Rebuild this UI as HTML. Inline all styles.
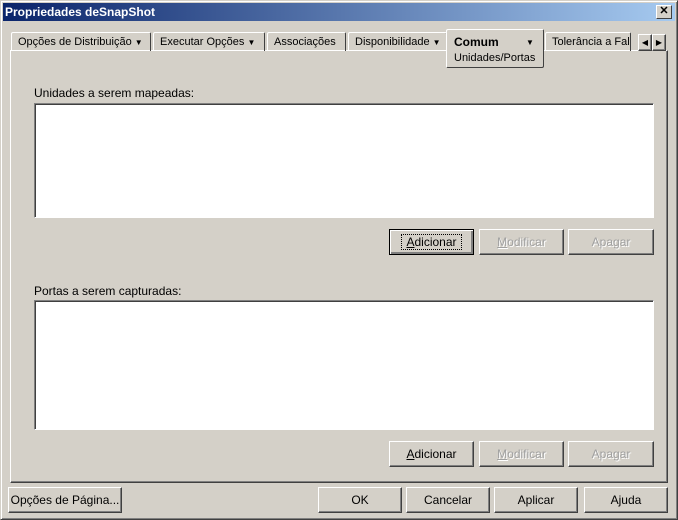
<!DOCTYPE html><html><head><style>
body{margin:0;width:678px;height:520px;background:#d4d0c8;font:11px "Liberation Sans",sans-serif;position:relative;overflow:hidden}
.a{position:absolute}
.win{left:0;top:0;width:676px;height:518px;border:1px solid;border-color:#d4d0c8 #404040 #404040 #d4d0c8;box-shadow:inset 1px 1px #fff,inset -1px -1px #808080}
.title{left:3px;top:3px;width:672px;height:18px;background:linear-gradient(90deg,#0a246a,#a6caf0);color:#fff;font-weight:bold;font-size:12px;line-height:18px;text-indent:2px}
.x{left:656px;top:5px;width:14px;height:12px;background:#d4d0c8;border:1px solid;border-color:#fff #404040 #404040 #fff;color:#000;font-size:11px;line-height:11px;text-align:center;font-weight:bold}
.btn{background:#d4d0c8;border:1px solid;border-color:#fff #404040 #404040 #fff;box-shadow:inset -1px -1px #808080;text-align:center;line-height:24px;box-sizing:border-box;height:26px;font-size:12px}
.dis{color:#a0a0a0;text-shadow:1px 1px #fff}
.tab{top:32px;height:19px;border:1px solid;border-bottom:none;border-color:#fff #404040 #fff #fff;border-radius:2px 2px 0 0;box-sizing:border-box;line-height:18px;padding-left:6px;white-space:nowrap;overflow:hidden}
.panel{left:10px;top:50px;width:658px;height:433px;border:1px solid;border-color:#fff #404040 #404040 #fff;box-sizing:border-box;box-shadow:inset -1px -1px #808080}
.list{background:#fff;border:1px solid;border-color:#808080 #fff #fff #808080;box-shadow:inset 1px 1px #404040;box-sizing:border-box}
.arr{font-size:8px}
</style></head><body>
<div class="a win"></div>
<div class="a title">Propriedades deSnapShot</div>
<div class="a x">✕</div>
<div class="a panel"></div>
<div class="a tab" style="left:11px;width:140px">Opções de Distribuição <span class="arr">▼</span></div>
<div class="a tab" style="left:153px;width:112px">Executar Opções <span class="arr">▼</span></div>
<div class="a tab" style="left:267px;width:79px">Associações</div>
<div class="a tab" style="left:348px;width:99px">Disponibilidade <span class="arr">▼</span></div>
<div class="a tab" style="left:545px;width:86px">Tolerância a Falha</div>
<div class="a" style="left:446px;top:29px;width:98px;height:39px;background:#d4d0c8;border:1px solid;border-color:#fff #404040 #404040 #fff;border-radius:2px;box-sizing:border-box"></div>
<div class="a" style="left:454px;top:35px;font-weight:bold;font-size:12px">Comum</div>
<div class="a arr" style="left:526px;top:38px">▼</div>
<div class="a" style="left:454px;top:52px">Unidades/Portas</div>
<div class="a btn" style="left:638px;top:34px;width:14px;height:17px;line-height:15px;font-size:8px">◀</div>
<div class="a btn" style="left:652px;top:34px;width:14px;height:17px;line-height:15px;font-size:8px">▶</div>
<div class="a" style="left:34px;top:86px;font-size:12px">Unidades a serem mapeadas:</div>
<div class="a list" style="left:34px;top:103px;width:620px;height:115px"></div>
<div class="a btn" style="left:389px;top:229px;width:85px;border:1px solid #000;box-shadow:inset 1px 1px #fff,inset -2px -2px #808080"><span style="outline:1px dotted #000;padding:0 4px"><u>A</u>dicionar</span></div>
<div class="a btn dis" style="left:479px;top:229px;width:85px"><u>M</u>odificar</div>
<div class="a btn dis" style="left:568px;top:229px;width:86px">Apa<u>g</u>ar</div>
<div class="a" style="left:34px;top:284px;font-size:12px">Portas a serem capturadas:</div>
<div class="a list" style="left:34px;top:300px;width:620px;height:130px"></div>
<div class="a btn" style="left:389px;top:441px;width:85px"><u>A</u>dicionar</div>
<div class="a btn dis" style="left:479px;top:441px;width:85px"><u>M</u>odificar</div>
<div class="a btn dis" style="left:568px;top:441px;width:86px">Apa<u>g</u>ar</div>
<div class="a btn" style="left:8px;top:487px;width:114px">Opções de Pá<u>g</u>ina...</div>
<div class="a btn" style="left:318px;top:487px;width:84px">OK</div>
<div class="a btn" style="left:406px;top:487px;width:84px">Cancelar</div>
<div class="a btn" style="left:494px;top:487px;width:84px">Aplicar</div>
<div class="a btn" style="left:584px;top:487px;width:84px">Ajuda</div>
</body></html>
